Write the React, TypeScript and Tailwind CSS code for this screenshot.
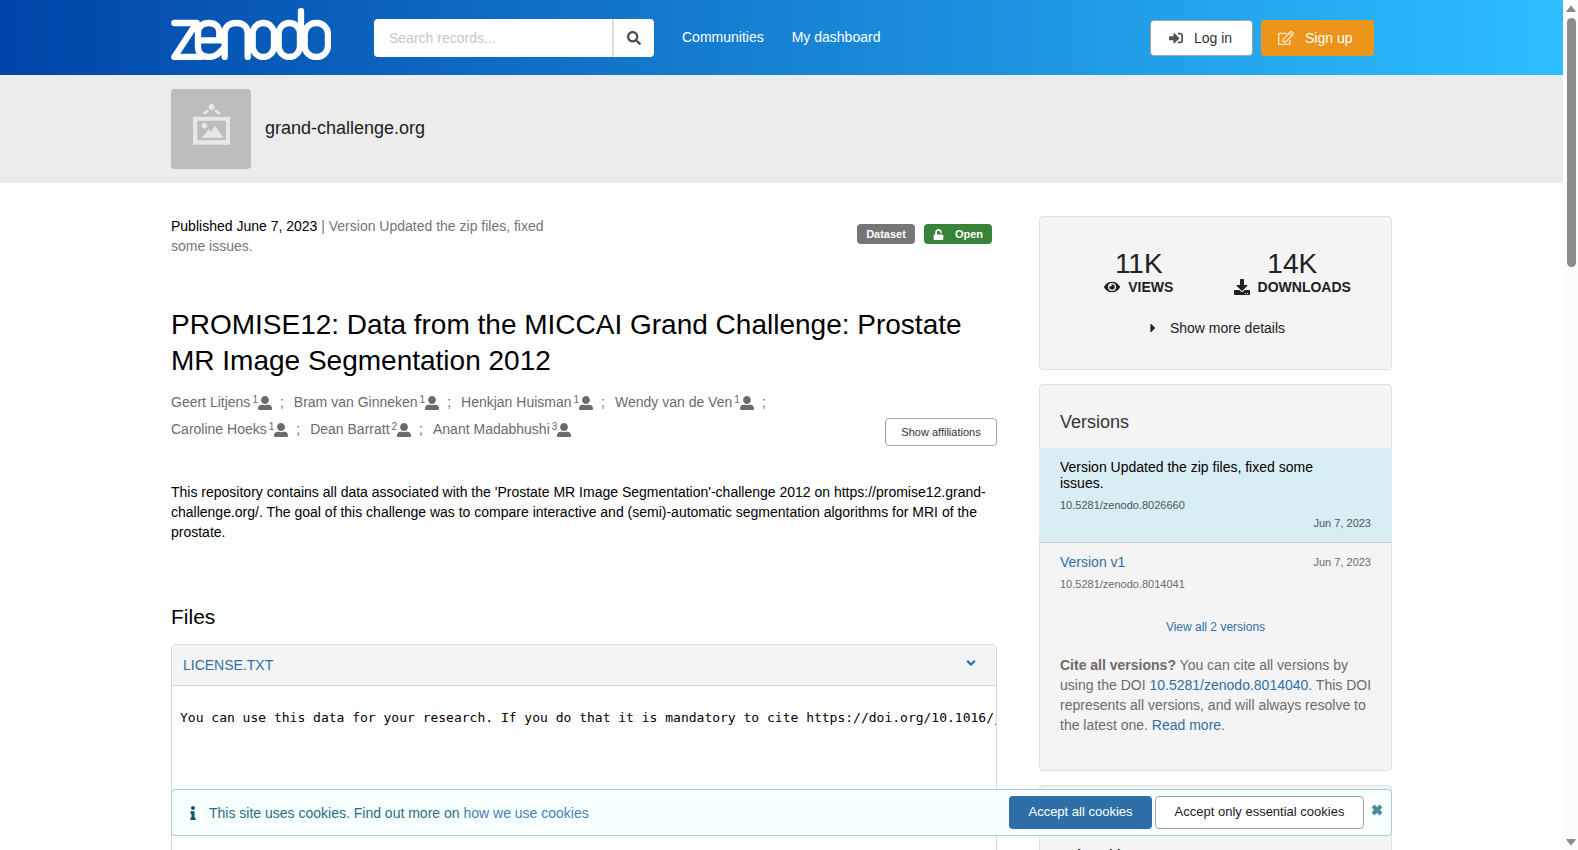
import {
  FaAngleDown, FaCaretRight, FaDownload, FaEye, FaInfo, FaRegEdit,
  FaSearch, FaSignInAlt, FaUnlock, FaUserAlt,
} from 'react-icons/fa';

const authors = [
  { name: 'Geert Litjens', affiliation: 1 },
  { name: 'Bram van Ginneken', affiliation: 1 },
  { name: 'Henkjan Huisman', affiliation: 1 },
  { name: 'Wendy van de Ven', affiliation: 1 },
  { name: 'Caroline Hoeks', affiliation: 1 },
  { name: 'Dean Barratt', affiliation: 2 },
  { name: 'Anant Madabhushi', affiliation: 3 },
];

const stats = [
  { value: '11K', label: 'VIEWS', icon: FaEye },
  { value: '14K', label: 'DOWNLOADS', icon: FaDownload },
];

function Logo() {
  return (
    <svg
      viewBox="33 24 480 156"
      className="h-[52px] w-40"
      fill="none"
      stroke="white"
      strokeWidth="19"
      strokeLinecap="round"
      strokeLinejoin="round"
      role="img"
      aria-label="Zenodo"
    >
      <path d="M43 69H110L43 171H125" />
      <path d="M178 116V98C178 79 165 69 147 69S114 79 114 98V142C114 161 128 171 147 171C166 171 177 160 190 146" />
      <path d="M114 121H192" />
      <path d="M194 171V100C194 80 208 69 229 69S263 80 263 100V171" />
      <rect x="278" y="69" width="64" height="102" rx="32" />
      <rect x="356" y="69" width="64" height="102" rx="32" />
      <path d="M423 33V110" />
      <rect x="434" y="69" width="70" height="102" rx="34" />
    </svg>
  );
}

function CommunityImage() {
  return (
    <svg viewBox="0 0 240 240" className="size-20 rounded bg-[#bcbdbf]" fill="#e6e7e9">
      <circle cx="122" cy="54" r="9" />
      <path d="M111 64L98 75M133 64L146 75" stroke="#e6e7e9" strokeWidth="8" />
      <path fillRule="evenodd" d="M66 83H177V167H66ZM79 95V154H165V95Z" />
      <circle cx="100" cy="110" r="8" />
      <path d="M92 146L114 121L120 128L133 110L157 146Z" />
    </svg>
  );
}

function Header() {
  return (
    <header className="h-[75px] shrink-0 bg-[linear-gradient(90deg,#0045a9,#2dbfff)]">
      <div className="mx-auto flex max-w-[1221px] items-start pr-[18px]">
        <a href="#" className="mt-2">
          <Logo />
        </a>
        <form className="mt-[19px] ml-[43px] flex h-[38px] w-[280px] overflow-hidden rounded">
          <input
            type="search"
            aria-label="Search records"
            placeholder="Search records..."
            className="min-w-0 flex-1 bg-white px-[15px] text-sm placeholder:text-[#c7c7c7]"
          />
          <button
            type="button"
            aria-label="Search"
            className="flex w-[42px] items-center justify-center border-l-2 border-[#dedede] bg-white text-[#4d4d4d]"
          >
            <FaSearch size={14} />
          </button>
        </form>
        <nav className="ml-7 flex h-[74px] items-center gap-7 text-sm text-white">
          <a href="#">Communities</a>
          <a href="#">My dashboard</a>
        </nav>
        <div className="mt-5 ml-auto flex gap-2 text-sm">
          <button className="flex h-9 w-[103px] items-center gap-[11px] rounded border border-[#a5a5a5] bg-white pl-[18px] text-[#333]">
            <FaSignInAlt size={14} className="text-[#555]" />
            Log in
          </button>
          <button className="flex h-9 w-[113px] items-center gap-[11px] rounded bg-[#ec951a] pl-[17px] text-white">
            <FaRegEdit size={16} className="opacity-80" />
            Sign up
          </button>
        </div>
      </div>
    </header>
  );
}

function Community() {
  return (
    <section className="shrink-0 bg-[#ececec] py-3.5">
      <div className="mx-auto flex max-w-[1221px] items-center gap-3.5">
        <CommunityImage />
        <a href="#" className="pb-0.5 text-lg text-[#212121]">grand-challenge.org</a>
      </div>
    </section>
  );
}

function Record() {
  return (
    <article className="min-w-0 flex-1">
      <div className="flex justify-between">
        <p className="max-w-[400px] text-sm leading-5 text-[#757575]">
          <span className="text-black">Published June 7, 2023</span> | Version Updated the zip files, fixed some issues.
        </p>
        <div className="mt-2 mr-[5px] flex h-5 gap-[9px] text-[11px] font-bold text-white">
          <span className="flex items-center rounded bg-[#767676] px-[9px]">Dataset</span>
          <span className="flex items-center gap-[11px] rounded bg-[#388339] px-[9px]">
            <FaUnlock size={11} />
            Open
          </span>
        </div>
      </div>

      <h1 className="mt-[51px] text-[28px] leading-9 text-black">
        PROMISE12: Data from the MICCAI Grand Challenge: Prostate MR Image Segmentation 2012
      </h1>

      <div className="mt-2.5 flex items-end">
        <ul className="flex flex-1 flex-wrap pb-[3px] text-sm leading-[27px] text-[#6b6b6b]">
          {authors.map(({ name, affiliation }, i) => (
            <li key={name} className="mr-2.5 flex items-center">
              <a href="#">{name}</a>
              <sup className="static ml-0.5 self-start text-[10px] leading-[21px]">{affiliation}</sup>
              <FaUserAlt size={14} className="mr-2" />
              {i < authors.length - 1 && ';'}
            </li>
          ))}
        </ul>
        <button className="h-7 w-28 rounded border border-[#a5a5a5] bg-white text-[11px] text-[#333]">
          Show affiliations
        </button>
      </div>

      <p className="mt-9 text-sm leading-5 text-black">
        This repository contains all data associated with the 'Prostate MR Image Segmentation'-challenge 2012 on
        https://promise12.grand-challenge.org/. The goal of this challenge was to compare interactive and
        (semi)-automatic segmentation algorithms for MRI of the prostate.
      </p>

      <h2 className="mt-[63px] text-[21px] leading-6 text-black">Files</h2>
      <section className="mt-[15px] rounded border border-[#d8d8d8]">
        <div className="flex h-[41px] items-center justify-between border-b border-[#d4d4d5] bg-[#f4f4f4] pr-[18px] pl-[11px] text-sm text-[#2f6fa7]">
          <a href="#">LICENSE.TXT</a>
          <button aria-label="Toggle preview" className="pb-1">
            <FaAngleDown size={14} />
          </button>
        </div>
        <pre className="min-h-[350px] overflow-hidden px-2 pt-[22px] font-['DejaVu_Sans_Mono',monospace] text-[13px] leading-5 text-black">
          You can use this data for your research. If you do that it is mandatory to cite https://doi.org/10.1016/j.media.2013.12.002
        </pre>
      </section>
    </article>
  );
}

function Sidebar() {
  return (
    <aside className="flex w-[353px] shrink-0 flex-col gap-3.5">
      <section className="h-[154px] rounded border border-[#e0e0e0] bg-[#f4f4f4] px-[22px] pt-[33px] text-center text-[#212121]">
        <div className="flex">
          {stats.map(({ value, label, icon: Icon }) => (
            <div key={label} className="flex-1">
              <p className="text-[28px] leading-7">{value}</p>
              <p className="flex items-center justify-center gap-2 text-sm leading-[18px] font-bold">
                <Icon size={16} />
                {label}
              </p>
            </div>
          ))}
        </div>
        <button className="mx-auto mt-[22px] flex items-center gap-2.5 text-sm">
          <FaCaretRight size={14} />
          Show more details
        </button>
      </section>

      <section className="h-[387px] rounded border border-[#e0e0e0] bg-[#f4f4f4] text-sm text-[#6b6b6b]">
        <h2 className="px-5 pt-[23px] pb-3 text-lg text-[#333]">Versions</h2>
        <div className="-mx-px border-b border-[#cbcbcb] bg-[#d9edf5] px-[21px] pt-[11px] pb-[11px]">
          <p className="pr-14 leading-4 text-black">Version Updated the zip files, fixed some issues.</p>
          <p className="mt-1.5 text-[11px] leading-4 text-[#4f565a]">10.5281/zenodo.8026660</p>
          <p className="mt-0.5 text-right text-[11px] leading-4 text-[#4f565a]">Jun 7, 2023</p>
        </div>
        <div className="px-5 pt-[11px] text-[11px] leading-4">
          <div className="flex items-center justify-between">
            <a href="#" className="text-sm leading-4 text-[#2f6fa7]">Version v1</a>
            <span>Jun 7, 2023</span>
          </div>
          <p className="mt-1.5">10.5281/zenodo.8014041</p>
        </div>
        <p className="mt-[27px] text-center text-xs leading-4">
          <a href="#" className="text-[#2f6fa7]">View all 2 versions</a>
        </p>
        <p className="mt-5 pr-4 pl-5 leading-5">
          <strong>Cite all versions?</strong> You can cite all versions by using the DOI{' '}
          <a href="#" className="text-[#2f6fa7]">10.5281/zenodo.8014040</a>. This DOI represents all versions, and
          will always resolve to the latest one. <a href="#" className="text-[#2f6fa7]">Read more</a>.
        </p>
      </section>

      <section className="h-40 rounded border border-[#e0e0e0] bg-[#f4f4f4] px-5 pt-[59px]">
        <h2 className="text-sm leading-5 font-bold text-[#212121]">Indexed in</h2>
      </section>
    </aside>
  );
}

function CookieBanner() {
  return (
    <div className="absolute inset-x-0 bottom-3.5">
      <div className="mx-auto flex h-[47px] max-w-[1221px] items-center rounded border border-[#a3cdd8] bg-[#f8ffff] pr-[7px] pl-3.5 text-sm text-[#276f86]">
        <FaInfo size={14} className="text-[#0e566c]" />
        <p className="ml-[9px] flex-1">
          This site uses cookies. Find out more on <a href="#" className="text-[#4381b5]">how we use cookies</a>
        </p>
        <button className="h-[33px] w-[143px] rounded bg-[#2f6fa7] text-[13px] text-white">
          Accept all cookies
        </button>
        <button className="ml-[3px] h-[33px] w-[209px] rounded border border-[#a5a5a5] bg-white text-[13px] text-[#212121]">
          Accept only essential cookies
        </button>
        <button aria-label="Close" className="mb-1.5 ml-1.5">
          <svg viewBox="0 0 14 14" className="size-3.5" stroke="#4f8a9c" strokeWidth="4">
            <path d="M3 3L11 11M11 3L3 11" />
          </svg>
        </button>
      </div>
    </div>
  );
}

function ScrollTrack() {
  return (
    <div className="flex w-[15px] shrink-0 flex-col items-center bg-[#fcfcfc] pt-[5px] pb-1 pl-px">
      <svg viewBox="0 0 10 8" className="h-2 w-2.5" fill="#8b8b8b">
        <path d="M5 0.5L9.5 6V7H0.5V6Z" />
      </svg>
      <div className="mt-[5px] h-[249px] w-[9px] rounded-full bg-[#8b8b8b]" />
      <svg viewBox="0 0 10 8" className="mt-auto h-2 w-2.5" fill="#8b8b8b">
        <path d="M5 7.5L9.5 2V1H0.5V2Z" />
      </svg>
    </div>
  );
}

export default function App() {
  return (
    <div className="flex h-screen overflow-hidden bg-white font-['Liberation_Sans',Arial,sans-serif]">
      <div className="relative flex min-w-0 flex-1 flex-col overflow-hidden">
        <Header />
        <Community />
        <main className="mx-auto flex w-full max-w-[1221px] gap-[42px] pt-[33px]">
          <Record />
          <Sidebar />
        </main>
        <CookieBanner />
      </div>
      <ScrollTrack />
    </div>
  );
}
